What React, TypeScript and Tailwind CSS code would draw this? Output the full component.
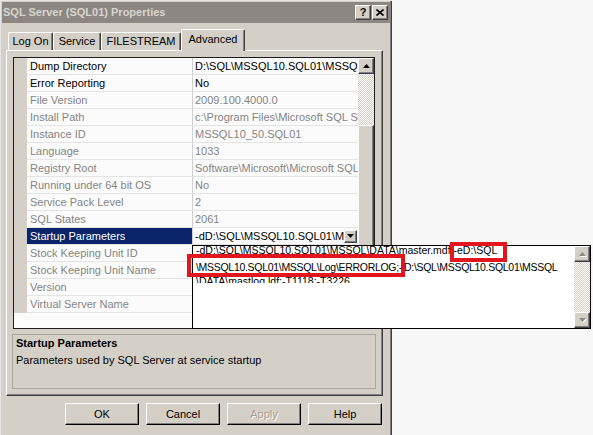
import React from "react";

/*============ PROPERTY ROWS ============*/
type Row = { name: string; value: string; editable?: boolean; selected?: boolean };

const rows: Row[] = [
  { name: "Dump Directory", value: "D:\\SQL\\MSSQL10.SQL01\\MSSQL\\LOG\\", editable: true },
  { name: "Error Reporting", value: "No", editable: true },
  { name: "File Version", value: "2009.100.4000.0" },
  { name: "Install Path", value: "c:\\Program Files\\Microsoft SQL Server\\MSSQL10.SQL01" },
  { name: "Instance ID", value: "MSSQL10_50.SQL01" },
  { name: "Language", value: "1033" },
  { name: "Registry Root", value: "Software\\Microsoft\\Microsoft SQL Server\\MSSQL10.SQL01" },
  { name: "Running under 64 bit OS", value: "No" },
  { name: "Service Pack Level", value: "2" },
  { name: "SQL States", value: "2061" },
  { name: "Startup Parameters", value: "-dD:\\SQL\\MSSQL10.SQL01\\MSSQL\\DATA\\master.mdf", editable: true, selected: true },
  { name: "Stock Keeping Unit ID", value: "" },
  { name: "Stock Keeping Unit Name", value: "" },
  { name: "Version", value: "" },
  { name: "Virtual Server Name", value: "" },
];

// classic raised 3D look
const raised =
  "bg-[#d4d0c8] border border-t-white border-l-white border-r-[#404040] border-b-[#404040] shadow-[inset_-1px_-1px_0_#808080]";
const hatch =
  "bg-[image:repeating-conic-gradient(#d4d0c8_0%_25%,#ffffff_0%_50%)] bg-[length:2px_2px]";

function Arrow({ up, disabled }: { up?: boolean; disabled?: boolean }) {
  return (
    <svg width="7" height="4" viewBox="0 0 7 4" className={disabled ? "drop-shadow-[1px_1px_0_#ffffff]" : ""}>
      <polygon points={up ? "3.5,0 7,4 0,4" : "0,0 7,0 3.5,4"} fill={disabled ? "#8c8984" : "#000"} />
    </svg>
  );
}

function Tab({ label, w, active }: { label: string; w: string; active?: boolean }) {
  return (
    <div
      className={`${w} flex items-center justify-center rounded-t-[2px] border-l border-t border-white border-r border-r-[#404040] shadow-[inset_-1px_0_0_#808080] bg-[#d4d0c8] ${
        active ? "h-[22px] -mb-[1px] relative z-10 pb-[3px]" : "h-[18px]"
      }`}
    >
      {label}
    </div>
  );
}

function DialogButton({ label, disabled }: { label: string; disabled?: boolean }) {
  return (
    <button
      className={`w-[74px] h-[22px] ${raised} border-r-black border-b-black flex items-center justify-center ${
        disabled ? "text-[#a19e99] [text-shadow:1px_1px_0_#ffffff]" : "text-black"
      }`}
    >
      {label}
    </button>
  );
}

export default function App() {
  return (
    <div className="w-[593px] h-[435px] bg-[#f7f7f7] relative overflow-hidden font-['Liberation_Sans',Arial,sans-serif] text-[11px] text-black">
      {/*============ DIALOG ============*/}
      <div className="w-[392px] h-[445px] bg-[#d4d0c8] p-[2px] flex flex-col shadow-[inset_1px_1px_0_#e8e6e2,inset_-1px_-1px_0_#404040,inset_-2px_-2px_0_#808080]">
        {/*======== TITLE BAR ========*/}
        <div className="h-[21px] bg-[#8c8782] flex items-center justify-between pl-[1px] pr-[2px]">
          <span className="font-bold text-[#d8d5d0]">SQL Server (SQL01) Properties</span>
          <div className="flex gap-[1px]">
            <div className={`w-[16px] h-[15px] ${raised} flex items-center justify-center font-bold text-[11px] leading-none`}>?</div>
            <div className={`w-[16px] h-[15px] ${raised} flex items-center justify-center`}>
              <svg width="8" height="7" viewBox="0 0 8 7">
                <path d="M0.5 0.5 L7.5 6.5 M7.5 0.5 L0.5 6.5" stroke="#000" strokeWidth="1.6" />
              </svg>
            </div>
          </div>
        </div>

        {/*======== TABS ========*/}
        <div className="flex items-end h-[21px] mt-[6px] pl-[6px]">
          <Tab label="Log On" w="w-[45px]" />
          <Tab label="Service" w="w-[48px]" />
          <Tab label="FILESTREAM" w="w-[80px]" />
          <Tab label="Advanced" w="w-[64px]" active />
        </div>

        {/*======== TAB PANEL ========*/}
        <div className="ml-[4px] w-[377px] h-[346px] border border-t-white border-l-white border-r-[#404040] border-b-[#404040] shadow-[inset_-1px_-1px_0_#808080] pl-[6px] pt-[6px] flex flex-col">
          {/*==== PROPERTY GRID ====*/}
          <div className="w-[362px] h-[272px] border border-[#1e1e1e] bg-[#fbfbfb] flex">
            <div className="flex-1 flex flex-col">
              {rows.map((row) => (
                <div key={row.name} className="flex h-[17px]">
                  <div className="w-[13px] bg-[#d4d0c8]" />
                  <div
                    className={`w-[165px] pl-[3px] flex items-center whitespace-nowrap overflow-hidden border-b border-[#e4e4e4] ${
                      row.selected ? "bg-[#0a246a] text-white border-[#0a246a]" : row.editable ? "text-black" : "text-[#858585]"
                    }`}
                  >
                    {row.name}
                  </div>
                  <div
                    className={`w-[166px] pl-[2px] flex items-center border-l border-l-[#d0d0d0] border-b border-[#e4e4e4] overflow-hidden ${
                      row.editable ? "text-black" : "text-[#858585]"
                    }`}
                  >
                    <span className="flex-1 whitespace-nowrap overflow-hidden">{row.value}</span>
                    {row.selected && (
                      <div className={`w-[13px] h-[13px] shrink-0 ${raised} flex items-center justify-center mr-[1px]`}>
                        <Arrow />
                      </div>
                    )}
                  </div>
                </div>
              ))}
            </div>
            {/*==== GRID SCROLLBAR ====*/}
            <div className="w-[16px] flex flex-col">
              <div className={`h-[16px] ${raised} flex items-center justify-center`}>
                <Arrow up />
              </div>
              <div className={`h-[51px] ${hatch}`} />
              <div className={`h-[171px] ${raised}`} />
              <div className={`flex-1 ${hatch}`} />
              <div className={`h-[16px] ${raised} flex items-center justify-center`}>
                <Arrow />
              </div>
            </div>
          </div>

          {/*==== DESCRIPTION ====*/}
          <div className="mt-[5px] -ml-[1px] w-[364px] h-[55px] border border-[#a8a49e] pl-[3px] leading-[17px]">
            <div className="font-bold">Startup Parameters</div>
            <div>Parameters used by SQL Server at service startup</div>
          </div>
        </div>

        {/*======== BUTTONS ========*/}
        <div className="flex justify-end gap-[7px] pr-[8px] mt-[7px]">
          <DialogButton label="OK" />
          <DialogButton label="Cancel" />
          <DialogButton label="Apply" disabled />
          <DialogButton label="Help" />
        </div>
      </div>

      {/*============ STARTUP PARAMETERS DROP-DOWN EDITOR ============*/}
      <div className="absolute left-[192px] top-[245px] w-[399px] h-[84px] border border-black bg-white flex">
        <div className="flex-1 pl-[3px] overflow-hidden whitespace-nowrap text-[10.5px] text-black">
          <div className="-mt-[3px] h-[14px] leading-[14px]">-dD:\SQL\MSSQL10.SQL01\MSSQL\DATA\master.mdf;-eD:\SQL</div>
          <div className="mt-[3px] h-[14px] leading-[14px] tracking-[-0.3px]">\MSSQL10.SQL01\MSSQL\Log\ERRORLOG;-lD:\SQL\MSSQL10.SQL01\MSSQL</div>
          <div className="h-[9px] leading-[14px] overflow-hidden">\DATA\mastlog.ldf;-T1118;-T3226</div>
        </div>
        <div className="w-[16px] flex flex-col">
          <div className={`h-[16px] ${raised} flex items-center justify-center`}>
            <Arrow up disabled />
          </div>
          <div className={`flex-1 ${hatch}`} />
          <div className={`h-[16px] ${raised} flex items-center justify-center`}>
            <Arrow disabled />
          </div>
        </div>
      </div>

      {/*============ RED HIGHLIGHT BOXES ============*/}
      <div className="absolute left-[450px] top-[242px] w-[57px] h-[20px] border-4 border-[#e3161e]" />
      <div className="absolute left-[187px] top-[254px] w-[218px] h-[23px] border-4 border-[#e3161e]" />
    </div>
  );
}
